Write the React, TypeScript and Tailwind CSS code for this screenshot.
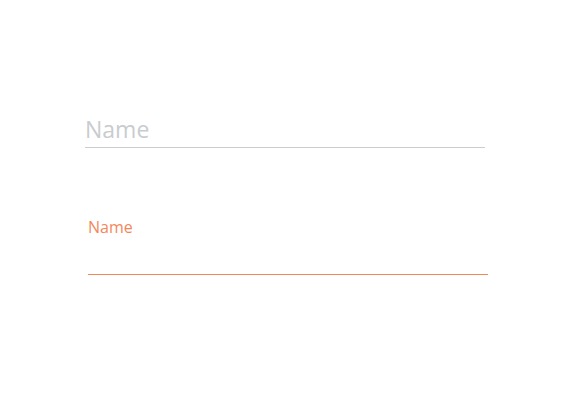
import React from 'react';

const font = { fontFamily: '"Open Sans", "Noto Sans", sans-serif' };

export default function App() {
  return (
    <div className="w-[570px] h-[414px] bg-white" style={font}>
      <div className="pt-[112px] pl-[85px]">
        <div className="w-[400px] h-[36px] border-b border-solid border-b-[#cccccc] text-[23px] leading-[34px] text-[#c9cccf]">
          Name
        </div>
      </div>
      <div className="pt-[68px] pl-[88px]">
        <div className="w-[400px] h-[59px] border-b border-solid border-b-[#f4875a] flex flex-col">
          <span className="text-[16px] leading-[22px] text-[#f4875a]">Name</span>
        </div>
      </div>
    </div>
  );
}
